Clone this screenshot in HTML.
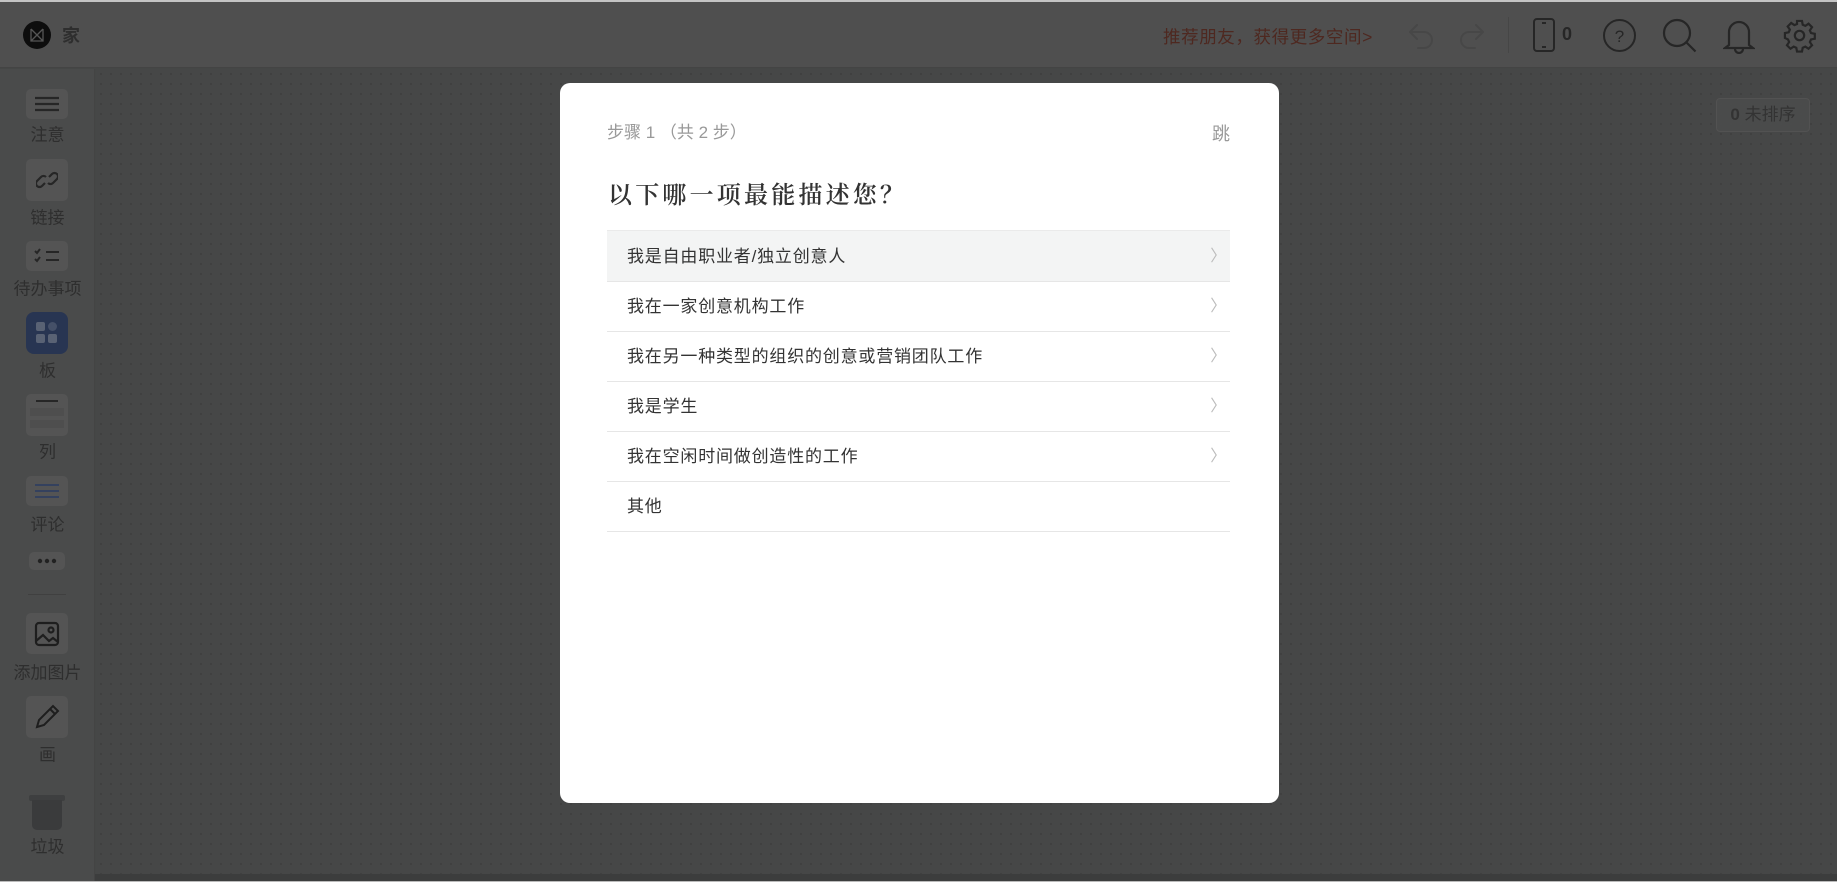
<!DOCTYPE html>
<html><head><meta charset="utf-8"><style>
*{margin:0;padding:0;box-sizing:border-box}
body{width:1837px;height:882px;overflow:hidden;background:#454746;font-family:"Liberation Sans","Noto Sans CJK SC",sans-serif;position:relative}
.top{position:absolute;left:0;top:0;width:1837px;height:2px;background:#c4c4c4}
.hdr{position:absolute;left:0;top:2px;width:1837px;height:66px;background:#4f4f4f;border-bottom:1px solid #444}
.side{position:absolute;left:0;top:69px;width:95px;height:813px;background:#4a4b4b;border-right:1px solid #444}
.canvas{position:absolute;left:96px;top:69px;right:0;bottom:8px;background-color:#464747;background-image:radial-gradient(circle,#3f4040 1px,transparent 1.2px);background-size:10px 10px}
.sb{position:absolute;left:95px;bottom:1px;right:0;height:7px;background:#3c3d3d}
.bot{position:absolute;left:0;bottom:0;width:1837px;height:1px;background:#bbb}
.box{position:absolute;left:26px;width:42px;background:#545454;border-radius:5px;display:flex;align-items:center;justify-content:center}
.lbl{position:absolute;left:0;width:95px;text-align:center;font-size:17px;color:#2e2e2e;transform:translateY(-50%);white-space:nowrap}
.modal{position:absolute;left:560px;top:83px;width:719px;height:720px;background:#fff;border-radius:10px}
.step{position:absolute;left:47px;top:35px;font-size:17px;color:#999}
.skip{position:absolute;right:49px;top:37px;font-size:18px;color:#999}
.title{position:absolute;left:48px;top:92px;font-family:"Liberation Serif","Noto Serif CJK SC",serif;font-size:24px;letter-spacing:3.2px;color:#333;font-weight:600}
.row{position:absolute;left:47px;width:623px;height:50px;border-bottom:1px solid #e6e6e6;font-size:17px;letter-spacing:0.8px;color:#333;line-height:50px;padding-left:20px}
.row .ch{position:absolute;right:3px;top:0;color:#bbb;font-size:16px}
.icon{position:absolute;top:18px}
</style></head><body>
<div class="top"></div>
<div class="hdr">
  <div style="position:absolute;left:23px;top:19px;width:28px;height:28px;border-radius:50%;background:#0d0d0d"></div>
  <svg style="position:absolute;left:30px;top:26px" width="14" height="14" viewBox="0 0 14 14" fill="none" stroke="#555" stroke-width="1.3"><path d="M1 1v12h12V1M1 1l12 12M13 1L1 13"/></svg>
  <div style="position:absolute;left:62px;top:20px;font-size:18px;font-weight:bold;color:#2e2e2e">家</div>
  <div style="position:absolute;left:1163px;top:22px;font-size:17.5px;letter-spacing:0.6px;color:#4e2820">推荐朋友，获得更多空间&gt;</div>
  <svg class="icon" style="left:1406px" width="30" height="30" viewBox="0 0 30 30" fill="none" stroke="#474747" stroke-width="2"><path d="M4 12h14a8 8 0 0 1 0 16h-6M4 12l7-7M4 12l7 7" stroke-linecap="round"/></svg>
  <svg class="icon" style="left:1457px" width="30" height="30" viewBox="0 0 30 30" fill="none" stroke="#474747" stroke-width="2"><path d="M26 12H12a8 8 0 0 0 0 16h6M26 12l-7-7M26 12l-7 7" stroke-linecap="round"/></svg>
  <div style="position:absolute;left:1508px;top:15px;width:1px;height:36px;background:#464646"></div>
  <svg class="icon" style="left:1533px;top:16px" width="22" height="34" viewBox="0 0 22 34" fill="none" stroke="#262626" stroke-width="2"><rect x="1" y="1" width="20" height="32" rx="3"/><path d="M9 5h4M9 29h4"/></svg>
  <div style="position:absolute;left:1562px;top:22px;font-size:18px;font-weight:bold;color:#262626">0</div>
  <svg class="icon" style="left:1602px;top:16px" width="35" height="35" viewBox="0 0 35 35" fill="none" stroke="#262626" stroke-width="2"><circle cx="17.5" cy="17.5" r="15.5"/><text x="17.5" y="24" font-size="17" text-anchor="middle" fill="#262626" stroke="none" font-family="Liberation Sans">?</text></svg>
  <svg class="icon" style="left:1662px;top:16px" width="36" height="36" viewBox="0 0 36 36" fill="none" stroke="#262626" stroke-width="2.2"><circle cx="15" cy="15" r="13"/><path d="M24.5 24.5l9 9"/></svg>
  <svg class="icon" style="left:1723px;top:16px" width="32" height="36" viewBox="0 0 32 36" fill="none" stroke="#262626" stroke-width="2.2"><path d="M6 27V14a10 10 0 0 1 20 0v13l4 3H2z M12 31a4 4 0 0 0 8 0"/></svg>
  <svg class="icon" style="left:1782px;top:16px" width="35" height="35" viewBox="0 0 24 24" fill="none" stroke="#262626" stroke-width="1.5"><circle cx="12" cy="12" r="3.2"/><path d="M10.3 2h3.4l.5 2.6 1.8.8 2.2-1.5 2.4 2.4-1.5 2.2.8 1.8 2.6.5v3.4l-2.6.5-.8 1.8 1.5 2.2-2.4 2.4-2.2-1.5-1.8.8-.5 2.6h-3.4l-.5-2.6-1.8-.8-2.2 1.5-2.4-2.4 1.5-2.2-.8-1.8L2 13.7v-3.4l2.6-.5.8-1.8-1.5-2.2 2.4-2.4 2.2 1.5 1.8-.8z"/></svg>
</div>
<div class="canvas"></div>
<div style="position:absolute;left:1716px;top:98px;width:94px;height:34px;border:1px solid #525252;border-radius:4px;background:#4a4b4b;font-size:17px;color:#333;line-height:32px;text-align:center"><b>0</b> 未排序</div>
<div class="sb"></div>
<div class="side">
  <div class="box" style="top:20px;height:30px"><svg width="26" height="16"><path d="M1 2h24M1 8h24M1 14h24" stroke="#262626" stroke-width="2.2"/></svg></div>
  <div class="lbl" style="top:64px">注意</div>
  <div class="box" style="top:90px;height:42px"><svg width="22" height="24" viewBox="0 0 22 24" fill="none" stroke="#262626" stroke-width="2.2"><path d="M9 15l-3 3a3.5 3.5 0 0 1-5-5l4-4a3.5 3.5 0 0 1 5 0M13 9l3-3a3.5 3.5 0 0 1 5 5l-4 4a3.5 3.5 0 0 1-5 0"/></svg></div>
  <div class="lbl" style="top:147px">链接</div>
  <div class="box" style="top:172px;height:30px"><svg width="26" height="16" fill="none" stroke="#262626" stroke-width="2"><path d="M1 3l2 2 3-4M1 11l2 2 3-4M12 4h13M12 12h13"/></svg></div>
  <div class="lbl" style="top:218px">待办事项</div>
  <div class="box" style="top:243px;height:42px;background:#283552;border-radius:8px"><svg width="22" height="22"><rect x="0" y="0" width="9" height="9" rx="2" fill="#596274"/><rect x="12" y="0" width="9" height="9" rx="4.5" fill="#455068"/><rect x="0" y="12" width="9" height="9" rx="2" fill="#596274"/><rect x="12" y="12" width="9" height="9" rx="2" fill="#596274"/></svg></div>
  <div class="lbl" style="top:300px">板</div>
  <div class="box" style="top:325px;height:42px;display:block"><div style="margin:6px 4px 0;height:2px;background:#262626;width:22px;margin-left:10px"></div><div style="margin:6px 4px 0;height:8px;background:#4e4e4e"></div><div style="margin:4px 4px 0;height:8px;background:#4e4e4e"></div></div>
  <div class="lbl" style="top:381px">列</div>
  <div class="box" style="top:407px;height:30px"><svg width="26" height="16"><path d="M1 2h24M1 8h24M1 14h24" stroke="#34415e" stroke-width="2"/></svg></div>
  <div class="lbl" style="top:454px">评论</div>
  <div class="box" style="top:483px;height:18px;left:29px;width:36px"><svg width="20" height="6"><circle cx="3" cy="3" r="2.2" fill="#222"/><circle cx="10" cy="3" r="2.2" fill="#222"/><circle cx="17" cy="3" r="2.2" fill="#222"/></svg></div>
  <div style="position:absolute;left:28px;top:525px;width:38px;height:1px;background:#404040"></div>
  <div class="box" style="top:544px;height:41px"><svg width="26" height="26" viewBox="0 0 26 26" fill="none" stroke="#1e1e1e" stroke-width="2.2"><rect x="2" y="2" width="22" height="22" rx="3"/><circle cx="17" cy="9" r="2.5"/><path d="M2 20l7-6 6 6 4-3 5 4"/></svg></div>
  <div class="lbl" style="top:602px">添加图片</div>
  <div class="box" style="top:627px;height:42px"><svg width="26" height="26" viewBox="0 0 26 26" fill="none" stroke="#1e1e1e" stroke-width="2"><path d="M3 23l2-7L19 2l5 5L10 21z M16 5l5 5"/></svg></div>
  <div class="lbl" style="top:684px">画</div>
  <div style="position:absolute;left:29px;top:726px;width:36px;height:6px;background:#3e3f40;border-radius:2px"></div>
  <div style="position:absolute;left:32px;top:731px;width:30px;height:30px;background:#3a3b3c;border-radius:0 0 5px 5px"></div>
  <div class="lbl" style="top:776px">垃圾</div>
</div>
<div class="bot"></div>
<div class="modal">
  <div class="step">步骤 1 （共 2 步）</div>
  <div class="skip">跳</div>
  <div class="title">以下哪一项最能描述您？</div>
  <div class="row" style="top:147px;height:52px;line-height:52px;background:#f3f4f4;border-top:1px solid #eaeaea">我是自由职业者/独立创意人<span class="ch">〉</span></div>
  <div class="row" style="top:199px">我在一家创意机构工作<span class="ch">〉</span></div>
  <div class="row" style="top:249px">我在另一种类型的组织的创意或营销团队工作<span class="ch">〉</span></div>
  <div class="row" style="top:299px">我是学生<span class="ch">〉</span></div>
  <div class="row" style="top:349px">我在空闲时间做创造性的工作<span class="ch">〉</span></div>
  <div class="row" style="top:399px">其他</div>
</div>
</body></html>
